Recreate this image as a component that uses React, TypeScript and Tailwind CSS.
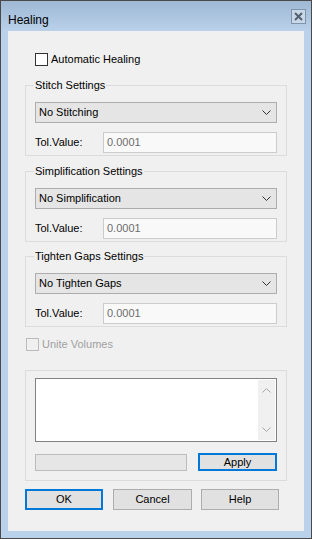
import React from 'react';

const font = { fontFamily: '"Liberation Sans", Arial, sans-serif' };

const Chevron = ({ up = false, color = '#333' }: { up?: boolean; color?: string }) => (
  <svg width="9" height="5" viewBox="0 0 9 5" className="block">
    <path d={up ? 'M0.5 4.5 L4.5 0.5 L8.5 4.5' : 'M0.5 0.5 L4.5 4.5 L8.5 0.5'} fill="none" stroke={color} strokeWidth="1" />
  </svg>
);

const GroupBox = ({ label, children }: { label: string; children: React.ReactNode }) => (
  <fieldset className="border border-[#dcdcdc] px-[9px] pb-[2px] pt-[10px]">
    <legend className="ml-[-1px] px-[1px] text-[11px] leading-[13px] text-black">{label}</legend>
    {children}
  </fieldset>
);

const ComboBox = ({ value }: { value: string }) => (
  <div className="flex h-[21px] items-center justify-between border border-[#adadad] bg-[#e5e5e5] pl-[3px] pr-[5px] text-[11px] text-black">
    <span>{value}</span>
    <Chevron />
  </div>
);

const TolRow = () => (
  <div className="mt-[9px] flex items-center">
    <span className="w-[68px] text-[11px] text-black">Tol.Value:</span>
    <div className="flex h-[21px] flex-1 items-center border border-[#cccccc] bg-[#f9f9f9] pl-[3px] text-[11px] text-[#6d6d6d]">
      0.0001
    </div>
  </div>
);

const Button = ({ label, focused = false, className = '' }: { label: string; focused?: boolean; className?: string }) => (
  <div
    className={
      'flex items-center justify-center bg-[#e1e1e1] text-[11px] text-black ' +
      (focused ? 'border-2 border-[#0078d7] ' : 'border border-[#adadad] ') +
      className
    }>
    {label}
  </div>
);

export default function App() {
  return (
    <div style={font} className="flex h-[539px] w-[312px] flex-col border border-[#4a4a4a] bg-[#b9d1ea]">
      {/* Title bar */}
      <div className="flex h-[30px] items-start justify-between bg-linear-to-b from-[#9fb8d4] to-[#b9d1ea] pl-[7px] pr-[5px]">
        <span className="pt-[11px] text-[12px] leading-[16px] text-black">Healing</span>
        <div className="mt-[8px] flex h-[15px] w-[15px] items-center justify-center border border-[#7f93ab] bg-[#c9d8e9]">
          <svg width="9" height="9" viewBox="0 0 9 9">
            <path d="M1 1 L8 8 M8 1 L1 8" stroke="#55606e" strokeWidth="2" />
          </svg>
        </div>
      </div>

      {/* Client area */}
      <div className="mx-[7px] flex h-[500px] flex-col bg-[#f0f0f0] px-[17px]">
        <label className="ml-[10px] mt-[22px] flex h-[13px] items-center gap-[3px]">
          <span className="h-[13px] w-[13px] border border-[#333333] bg-white" />
          <span className="text-[11px] text-black">Automatic Healing</span>
        </label>

        <div className="mt-[13px]">
          <GroupBox label="Stitch Settings">
            <ComboBox value="No Stitching" />
            <TolRow />
          </GroupBox>
        </div>

        <div className="mt-[9px]">
          <GroupBox label="Simplification Settings">
            <ComboBox value="No Simplification" />
            <TolRow />
          </GroupBox>
        </div>

        <div className="mt-[8px]">
          <GroupBox label="Tighten Gaps Settings">
            <ComboBox value="No Tighten Gaps" />
            <TolRow />
          </GroupBox>
        </div>

        <label className="ml-[1px] mt-[11px] flex h-[13px] items-center gap-[3px]">
          <span className="h-[13px] w-[13px] border border-[#bcbcbc] bg-[#f0f0f0]" />
          <span className="text-[11px] text-[#a0a0a0]">Unite Volumes</span>
        </label>

        <div className="mt-[19px] border border-[#dcdcdc] px-[9px] pb-[9px] pt-[7px]">
          <div className="flex h-[64px] border border-[#828282] bg-white">
            <div className="flex-1" />
            <div className="my-[1px] mr-[1px] flex w-[17px] flex-col items-center justify-between bg-[#f0f0f0] py-[8px]">
              <Chevron up color="#a6a6a6" />
              <Chevron color="#a6a6a6" />
            </div>
          </div>
          <div className="mt-[11px] flex items-center">
            <div className="h-[17px] w-[152px] border border-[#bcbcbc] bg-[#e6e6e6]" />
            <Button label="Apply" focused className="ml-[11px] h-[18px] w-[79px]" />
          </div>
        </div>

        <div className="mt-[8px] flex">
          <Button label="OK" focused className="h-[21px] w-[78px]" />
          <Button label="Cancel" className="ml-[10px] h-[21px] w-[79px]" />
          <Button label="Help" className="ml-[9px] h-[21px] w-[78px]" />
        </div>
      </div>
    </div>
  );
}
